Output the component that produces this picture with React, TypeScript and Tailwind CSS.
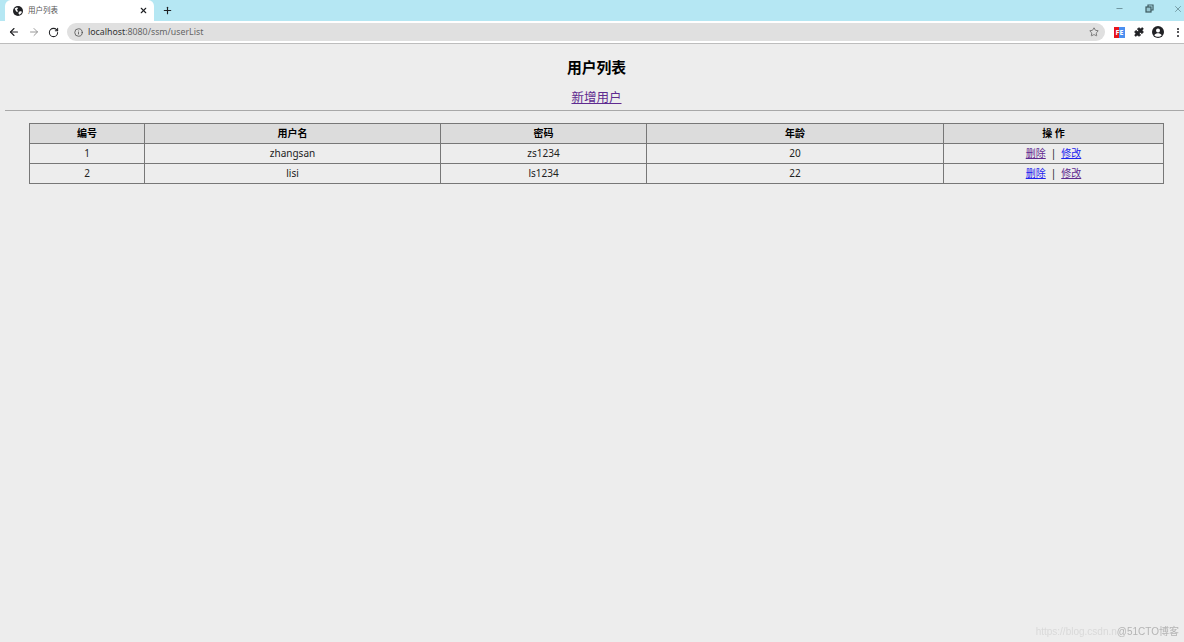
import { ArrowLeft, ArrowRight, Info, Minus, Plus, Puzzle, RotateCw, Star, X } from 'lucide-react';

const users = [
  { id: 1, name: 'zhangsan', password: 'zs1234', age: 20, firstVisited: true, secondVisited: false },
  { id: 2, name: 'lisi', password: 'ls1234', age: 22, firstVisited: false, secondVisited: true },
];

const font = "font-['Noto_Sans','Noto_Sans_CJK_SC',sans-serif]";
const visited = 'text-[#5f2b90] underline';
const unvisited = 'text-[#2222ee] underline';

function Globe() {
  return (
    <svg width="10" height="10" viewBox="0 0 24 24" className="shrink-0">
      <circle cx="12" cy="12" r="12" fill="#202124" />
      <path d="M4 6l6-3 2 3-3 3 3 3-2 3-3-3zM14 14l6-2 1 4-5 5-3-3z" fill="#ffffff" />
    </svg>
  );
}

function Avatar() {
  return (
    <svg width="12" height="12" viewBox="0 0 24 24" className="ml-[8px] shrink-0">
      <circle cx="12" cy="12" r="12" fill="#202124" />
      <circle cx="12" cy="9" r="4" fill="#ffffff" />
      <path d="M4.5 18.500c2-3 5-4 7.500-4s5.500 1 7.500 4c-2 2-4.500 3-7.500 3s-5.500-1-7.500-3z" fill="#ffffff" />
    </svg>
  );
}

function Chrome() {
  return (
    <div className="flex flex-col">
      {/* Tab strip */}
      <div className="flex h-[21px] items-end justify-between bg-[#b5e7f3]">
        <div className="flex items-center">
          <div className="ml-[5px] flex h-[21px] w-[149px] items-center rounded-t-[6px] bg-white pl-[8px] pr-[6px]">
            <Globe />
            <span className="ml-[5px] pt-[1px] text-[7.5px] text-[#555555]">用户列表</span>
            <X size={9} strokeWidth={3} className="ml-auto text-[#202124]" />
          </div>
          <Plus size={11} strokeWidth={2.5} className="ml-[8px] text-[#202124]" />
        </div>
        <div className="mr-[1px] flex h-[21px] items-start gap-[19px] pt-[4px] text-[#3c5a60]">
          <Minus size={9} strokeWidth={1.5} />
          <svg width="9" height="9" viewBox="0 0 9 9" className="ml-[2px]" fill="none" stroke="currentColor" strokeWidth="1.2">
            <rect x="1" y="3" width="5" height="5" fill="#3c5a60" fillOpacity="0.25" />
            <path d="M3 3V1h5v5H6" />
          </svg>
          <X size={10} strokeWidth={1.25} />
        </div>
      </div>
      {/* Address bar */}
      <div className="flex h-[22px] items-center bg-white pl-[8px]">
        <ArrowLeft size={12} strokeWidth={2.25} className="text-[#202124]" />
        <ArrowRight size={12} strokeWidth={1.75} className="ml-[8px] text-[#8a8a8a]" />
        <RotateCw size={11} strokeWidth={2.25} className="ml-[8px] text-[#202124]" />
        <div className="ml-[8px] flex h-[18px] w-[1038px] items-center rounded-full bg-[#e0e0e0] pl-[7px] pr-[6px]">
          <Info size={9} className="text-[#444444]" />
          <span className="ml-[5px] pt-[1px] text-[8.8px] text-[#666666]">
            <span className="text-[#333333]">localhost</span>:8080/ssm/userList
          </span>
          <Star size={10} strokeWidth={1.75} className="ml-auto text-[#555555]" />
        </div>
        <div className="ml-[9px] flex h-[11px] w-[11px] items-center justify-center bg-[linear-gradient(90deg,#e8141c_50%,#4a8ff0_50%)] text-[7px] font-bold leading-none text-white">
          FE
        </div>
        <Puzzle size={10} fill="#202124" className="ml-[9px] text-[#202124]" />
        <Avatar />
        <div className="ml-[13px] flex flex-col gap-[1.5px]">
          <span className="h-[2px] w-[2px] rounded-full bg-[#202124]" />
          <span className="h-[2px] w-[2px] rounded-full bg-[#202124]" />
          <span className="h-[2px] w-[2px] rounded-full bg-[#202124]" />
        </div>
      </div>
      <div className="h-[1px] bg-[#bdbdbd]" />
    </div>
  );
}

export default function App() {
  return (
    <div className={`relative flex h-[642px] flex-col overflow-hidden bg-[#ededed] ${font}`}>
      <Chrome />

      {/* Page body runs a bit past the right edge, so centred text sits right of middle */}
      <div className="ml-[5px] w-[1183px] shrink-0">
        <h1 className="mt-[12px] text-center text-[14.800px] font-bold leading-[22px] text-black">用户列表</h1>
        <div className="mt-[10px] text-center text-[12.500px] leading-[20px]">
          <a href="#" className={visited}>新增用户</a>
        </div>
        <hr className="mt-[2px] border-t border-[#a8a8a8]" />
      </div>

      {/* User table */}
      <table className="ml-[29px] mt-[12px] w-[1135px] table-fixed border-collapse border border-[#666666] text-center text-[10px] text-[#222222]">
        <colgroup>
          <col className="w-[115px]" />
          <col className="w-[296px]" />
          <col className="w-[206px]" />
          <col className="w-[297px]" />
          <col />
        </colgroup>
        <thead>
          <tr className="h-[20px] bg-[#dcdcdc] font-bold text-black">
            <th className="border border-[#777777] p-0">编号</th>
            <th className="border border-[#777777] p-0">用户名</th>
            <th className="border border-[#777777] p-0">密码</th>
            <th className="border border-[#777777] p-0">年龄</th>
            <th className="border border-[#777777] p-0">操 作</th>
          </tr>
        </thead>
        <tbody>
          {users.map((user) => (
            <tr key={user.id} className="h-[20px]">
              <td className="border border-[#777777] p-0">{user.id}</td>
              <td className="border border-[#777777] p-0">{user.name}</td>
              <td className="border border-[#777777] p-0">{user.password}</td>
              <td className="border border-[#777777] p-0">{user.age}</td>
              <td className="border border-[#777777] p-0">
                <a href="#" className={user.firstVisited ? visited : unvisited}>删除</a>
                <span className="mx-[5px]">|</span>
                <a href="#" className={user.secondVisited ? visited : unvisited}>修改</a>
              </td>
            </tr>
          ))}
        </tbody>
      </table>

      {/* Watermark */}
      <div className="absolute bottom-[3px] right-[5px] font-['Liberation_Sans','Noto_Sans_CJK_SC',sans-serif] text-[10px] text-[#d9d9d9] blur-[0.5px]">
        https://blog.csdn.n<span className="text-[#b4b4b4]">@51CTO博客</span>
      </div>
    </div>
  );
}
